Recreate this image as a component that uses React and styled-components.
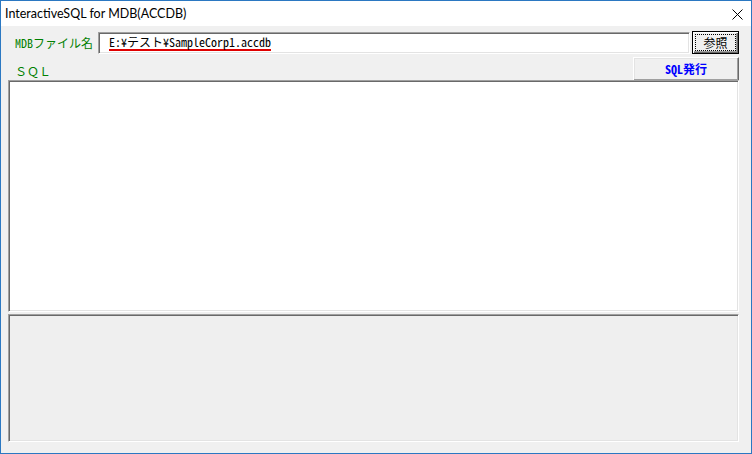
import React from 'react';
import styled, {createGlobalStyle} from 'styled-components';

const Global = createGlobalStyle`
  html, body {
    margin: 0;
    padding: 0;
    background: #fff;
  }
`;

const gothic = `"Noto Sans Mono CJK JP", "Noto Sans CJK JP", "Liberation Mono", monospace`;

const Window = styled.div`
  box-sizing: border-box;
  width: 752px;
  height: 454px;
  border: 1px solid #2b78c2;
  display: flex;
  flex-direction: column;
  background: #f0f0f0;
`;

const TitleBar = styled.div`
  height: 25px;
  background: #fff;
  display: flex;
  align-items: center;
  justify-content: space-between;
  padding: 0 8px 0 4px;
  font-family: Lato, "Noto Sans", sans-serif;
  font-size: 12.5px;
  color: #000;
`;

const Close = styled.svg`
  width: 11px;
  height: 11px;
  margin-top: 2px;
`;

const Body = styled.div`
  flex: 1;
  display: flex;
  flex-direction: column;
  padding: 5px 12px 11px 7px;
`;

const Row = styled.div`
  display: flex;
  align-items: center;
  height: ${p => p.h}px;
  margin-top: ${p => p.mt || 0}px;
`;

const Label = styled.div`
  font-family: ${gothic};
  font-size: 12px;
  color: #008000;
  padding-left: 7px;
  flex: ${p => (p.grow ? 1 : 'none')};
  margin-top: ${p => p.mt || 0}px;
`;

const sunken = `
  box-sizing: border-box;
  border: 1px solid;
  border-color: #a0a0a0 #fff #fff #a0a0a0;
  box-shadow: inset 1px 1px #696969, inset -1px -1px #e3e3e3;
`;

const FileBox = styled.div`
  ${sunken}
  flex: 1;
  height: 22px;
  margin-left: 5px;
  background: #fff;
  display: flex;
  align-items: center;
  padding-left: 10px;
  font-family: ${gothic};
  font-size: 12px;
  color: #000;
`;

const Squiggle = styled.span`
  border-bottom: 2px solid #e00000;
  line-height: 14px;
`;

const Button = styled.div`
  box-sizing: border-box;
  width: ${p => p.w}px;
  height: ${p => p.h}px;
  margin-left: ${p => p.ml || 0}px;
  background: #f0f0f0;
  display: flex;
  align-items: center;
  justify-content: center;
  font-family: ${gothic};
  font-size: 12px;
  font-weight: ${p => (p.bold ? 700 : 400)};
  color: ${p => p.color || '#000'};
  border: 1px solid;
  border-color: ${p => (p.def ? '#000' : '#fff #696969 #696969 #fff')};
  box-shadow: ${p => (p.def
    ? 'inset 1px 1px #fff, inset -1px -1px #696969, inset -2px -2px #a0a0a0'
    : 'inset -1px -1px #a0a0a0, inset 1px 1px #e3e3e3')};
`;

const Focus = styled.div`
  box-sizing: border-box;
  width: 41px;
  height: 17px;
  border: 1px dotted #000;
  display: flex;
  align-items: center;
  justify-content: center;
`;

const SqlArea = styled.div`
  ${sunken}
  height: 232px;
  background: #fff;
`;

const Output = styled.div`
  ${sunken}
  height: 128px;
  margin-top: 2px;
  background: #efefef;
`;

export default function App() {
  return (
    <>
      <Global/>
      <Window>
        <TitleBar>
          <span>InteractiveSQL for MDB(ACCDB)</span>
          <Close viewBox="0 0 11 11">
            <path d="M0.5 0.5 L10.5 10.5 M10.5 0.5 L0.5 10.5" stroke="#000" strokeWidth="1"/>
          </Close>
        </TitleBar>
        <Body>
          <Row h={23}>
            <Label>MDBファイル名</Label>
            <FileBox>
              <Squiggle>E:¥テスト¥SampleCorp1.accdb</Squiggle>
            </FileBox>
            <Button w={47} h={23} ml={2} def>
              <Focus>参照</Focus>
            </Button>
          </Row>
          <Row h={23} mt={3}>
            <Label grow mt={3}>ＳＱＬ</Label>
            <Button w={106} h={24} bold color="#0000ff">SQL発行</Button>
          </Row>
          <SqlArea/>
          <Output/>
        </Body>
      </Window>
    </>
  );
}
